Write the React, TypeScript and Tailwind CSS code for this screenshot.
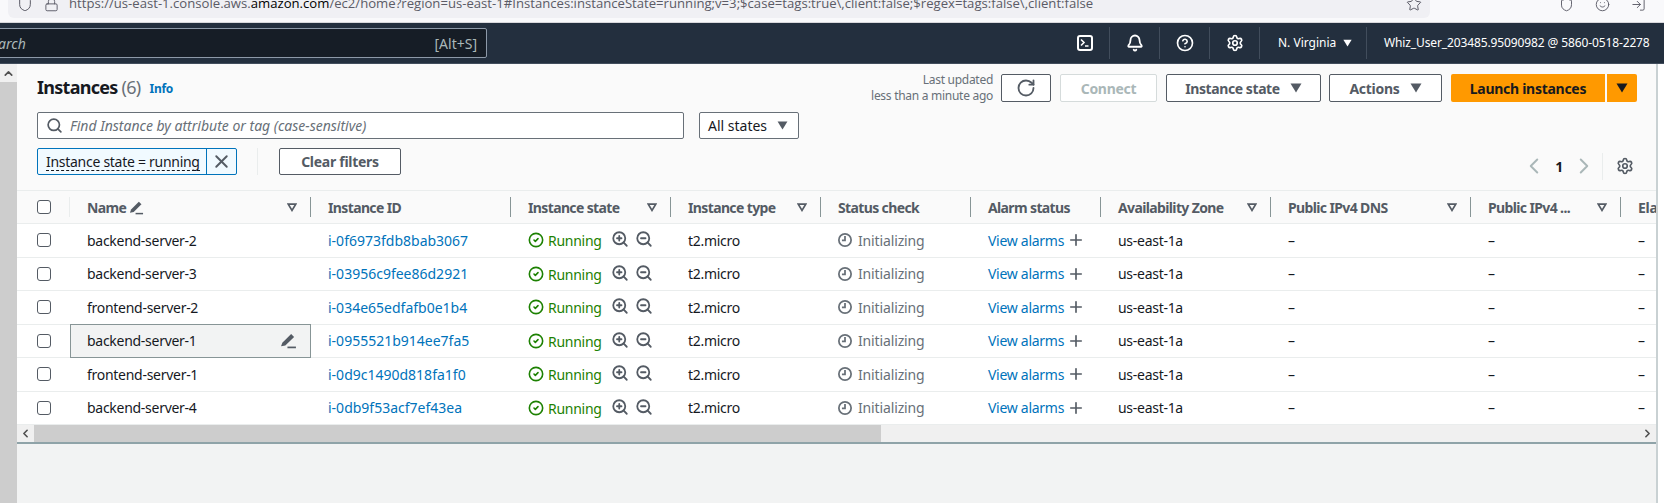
import { ChevronLeft, ChevronRight, ChevronUp, CircleCheck, CircleHelp, Lock, Plus, RotateCw, Search, Settings, Shield, Star, X, ZoomIn, ZoomOut, Bell, Smile, LogIn } from "lucide-react";

const ROWS = [
  { name: "backend-server-2", id: "i-0f6973fdb8bab3067" },
  { name: "backend-server-3", id: "i-03956c9fee86d2921" },
  { name: "frontend-server-2", id: "i-034e65edfafb0e1b4" },
  { name: "backend-server-1", id: "i-0955521b914ee7fa5", active: true },
  { name: "frontend-server-1", id: "i-0d9c1490d818fa1f0" },
  { name: "backend-server-4", id: "i-0db9f53acf7ef43ea" },
];

// fake triangle used by every dropdown
function Caret({ className = "" }: { className?: string }) {
  return (
    <svg viewBox="0 0 12 10" className={className} aria-hidden>
      <path d="M0.5 0.5h11L6 9.5z" fill="currentColor" />
    </svg>
  );
}

function SortCaret() {
  return (
    <svg viewBox="0 0 12 10" className="w-[10px] h-[9px] text-[#545b64]" aria-hidden>
      <path d="M1.5 1h9L6 8.5z" fill="none" stroke="currentColor" strokeWidth="2" />
    </svg>
  );
}

function Pencil({ className = "" }: { className?: string }) {
  return (
    <svg viewBox="0 0 16 16" className={className} aria-hidden>
      <path d="M1 13.5L2.2 10 10.5 1.8 13.3 4.6 5 12.8z" fill="currentColor" />
      <path d="M7 14.5h8" stroke="currentColor" strokeWidth="1.6" />
    </svg>
  );
}

function ClockIcon() {
  return (
    <svg viewBox="0 0 16 16" className="w-[14px] h-[14px] text-[#687078]" aria-hidden>
      <circle cx="8" cy="8" r="7" fill="none" stroke="currentColor" strokeWidth="2" />
      <path d="M8 3.5V8.5H4.5" fill="none" stroke="currentColor" strokeWidth="2" />
    </svg>
  );
}

function Terminal() {
  return (
    <svg viewBox="0 0 16 16" className="w-4 h-4 text-white" aria-hidden>
      <rect x="1" y="1" width="14" height="14" rx="2" fill="none" stroke="currentColor" strokeWidth="2" />
      <path d="M4 4.5L7 7.5 4 10.5M8 11h3.5" fill="none" stroke="currentColor" strokeWidth="1.6" />
    </svg>
  );
}

function Checkbox() {
  return <span className="block w-[14px] h-[14px] rounded-[3px] border border-[#545b64] bg-white" />;
}

function HeaderCell({ label, width, sort }: { label: React.ReactNode; width: string; sort?: boolean }) {
  return (
    <div className={`${width} shrink-0 h-full flex items-center pl-[17px] font-bold text-[#545b64] whitespace-nowrap tracking-[-0.045em]`}>
      <span className="flex-1 flex items-center gap-[3px] min-w-0">{label}</span>
      {sort && (
        <span className="mr-[13px]">
          <SortCaret />
        </span>
      )}
      <span className="w-px h-[20px] bg-[#879596]" />
    </div>
  );
}

function NavIcon({ children }: { children: React.ReactNode }) {
  return (
    <div className="w-[50px] h-[32px] flex items-center justify-center border-r border-[#414d5c]">
      {children}
    </div>
  );
}

export default function App() {
  return (
    <div className="w-[1664px] h-[503px] overflow-hidden flex flex-col bg-white text-[14px] text-[#16191f] [font-family:'Noto_Sans',sans-serif] tracking-[-0.02em]">
      {/* browser chrome, cut by the top of the screenshot */}
      <div className="h-[23px] shrink-0 overflow-hidden bg-[#f9f9fb] border-b border-[#d8d8dc]">
        <div className="-mt-[10px] h-[28px] flex items-center">
          <div className="ml-[8px] w-[1422px] h-[28px] rounded-[6px] bg-[#f0f0f4] flex items-center text-[#5b5b66]">
            <Shield className="ml-[9px] w-[16px] h-[16px]" strokeWidth={1.5} />
            <Lock className="ml-[11px] w-[15px] h-[15px]" strokeWidth={1.5} />
            <span className="ml-[10px] text-[13.13px] tracking-normal [font-family:'Open_Sans',sans-serif] whitespace-nowrap">
              https://us-east-1.console.aws.<span className="text-black">amazon.com</span>
              /ec2/home?region=us-east-1#Instances:instanceState=running;v=3;$case=tags:true\,client:false;$regex=tags:false\,client:false
            </span>
            <Star className="ml-auto mr-[8px] w-[16px] h-[16px]" strokeWidth={1.5} />
          </div>
          <div className="ml-auto mr-[18px] flex items-center gap-[21px] text-[#5b5b66]">
            <Shield className="w-[15px] h-[15px]" strokeWidth={1.5} />
            <Smile className="w-[15px] h-[15px]" strokeWidth={1.5} />
            <LogIn className="w-[15px] h-[15px]" strokeWidth={1.5} />
          </div>
        </div>
      </div>

      {/* AWS top nav */}
      <div className="h-[41px] shrink-0 bg-[#232f3e] border-b border-[#414d5c] flex items-center text-white text-[12px]">
        <div className="-ml-[37px] w-[524px] h-[30px] rounded-[2px] border border-[#8d99a8] bg-[#161d26] flex items-center justify-between pl-[20px] pr-[9px] text-[#aab7b8] text-[14px] tracking-normal">
          <span className="italic">Search</span>
          <span>[Alt+S]</span>
        </div>
        <div className="flex-1" />
        <NavIcon>
          <Terminal />
        </NavIcon>
        <NavIcon>
          <Bell className="w-[18px] h-[18px]" strokeWidth={2.4} />
        </NavIcon>
        <NavIcon>
          <CircleHelp className="w-[18px] h-[18px]" strokeWidth={2.2} />
        </NavIcon>
        <NavIcon>
          <Settings className="w-[18px] h-[18px]" strokeWidth={2.2} />
        </NavIcon>
        <div className="w-[107px] h-[32px] pl-[18px] flex items-center gap-[7px] border-r border-[#414d5c] whitespace-nowrap tracking-normal">
          N. Virginia
          <Caret className="w-[9px] h-[8px]" />
        </div>
        <div className="w-[297px] pl-[17px] overflow-hidden whitespace-nowrap tracking-[-0.01em]">Whiz_User_203485.95090982 @ 5860-0518-2278</div>
      </div>

      <div className="flex-1 min-h-0 flex">
        {/* page scrollbar */}
        <div className="w-[17px] shrink-0 bg-[#cdcdcd] flex flex-col">
          <div className="h-[18px] bg-[#f0f0f0] flex items-center justify-center">
            <ChevronUp className="w-[13px] h-[13px] text-[#505050]" strokeWidth={3} />
          </div>
        </div>

        <div className="w-[1639px] shrink-0 flex flex-col bg-[#f2f3f3] overflow-hidden">
          <div className="h-[127px] shrink-0 bg-[#fafafa] border-b border-[#eaeded] pl-[20px] pr-[19px] pt-[10px] flex flex-col">
            <div className="h-[28px] flex items-center">
              <h1 className="-mt-[1px] text-[18px] font-bold tracking-[-0.04em]">
                Instances <span className="font-normal text-[#687078]">(6)</span>
              </h1>
              <a className="ml-[9px] mt-[2px] text-[12px] font-bold text-[#0073bb]">Info</a>
              <div className="ml-auto text-right text-[12px] leading-[16px] text-[#687078]">
                Last updated
                <br />
                less than a minute ago
              </div>
              <button className="ml-[8px] w-[50px] h-[28px] flex items-center justify-center bg-white border border-[#545b64] rounded-[2px] text-[#545b64]">
                <RotateCw className="w-[20px] h-[20px]" strokeWidth={2.2} />
              </button>
              <button className="ml-[9px] w-[97px] h-[28px] bg-white border border-[#d5dbdb] rounded-[2px] font-bold text-[#aab7b8]">Connect</button>
              <button className="ml-[9px] w-[155px] h-[28px] flex items-center justify-center gap-[10px] bg-white border border-[#545b64] rounded-[2px] font-bold text-[#545b64] tracking-[-0.03em]">
                Instance state
                <Caret className="w-[12px] h-[10px]" />
              </button>
              <button className="ml-[8px] w-[113px] h-[28px] flex items-center justify-center gap-[10px] bg-white border border-[#545b64] rounded-[2px] font-bold text-[#545b64]">
                Actions
                <Caret className="w-[12px] h-[10px]" />
              </button>
              <button className="ml-[9px] w-[154px] h-[28px] bg-[#ff9900] rounded-l-[2px] font-bold text-[#16191f]">Launch instances</button>
              <button className="ml-[2px] w-[30px] h-[28px] flex items-center justify-center bg-[#ff9900] rounded-r-[2px] text-[#16191f]">
                <Caret className="w-[12px] h-[10px]" />
              </button>
            </div>

            <div className="mt-[10px] flex items-center">
              <div className="w-[647px] h-[27px] flex items-center bg-white border border-[#687078] rounded-[2px] pl-[8px] text-[#687078] tracking-normal">
                <Search className="w-[17px] h-[17px] text-[#545b64]" strokeWidth={2.4} />
                <span className="ml-[7px] italic">Find Instance by attribute or tag (case-sensitive)</span>
              </div>
              <div className="ml-[15px] w-[100px] h-[27px] flex items-center justify-between bg-white border border-[#687078] rounded-[2px] pl-[8px] pr-[10px] tracking-normal">
                All states
                <Caret className="w-[11px] h-[9px] text-[#545b64]" />
              </div>
            </div>

            <div className="mt-[9px] h-[27px] flex items-center">
              <div className="w-[200px] h-[27px] flex bg-[#f1faff] border border-[#0073bb] rounded-[2px]">
                <span className="flex-1 pl-[8px] flex items-center whitespace-nowrap overflow-hidden">
                  <span className="border-b border-dashed border-[#16191f] leading-[17px]">Instance state = running</span>
                </span>
                <span className="w-[30px] border-l border-[#0073bb] flex items-center justify-center text-[#545b64]">
                  <X className="w-[21px] h-[21px]" strokeWidth={2.2} />
                </span>
              </div>
              <span className="ml-[20px] w-px h-[27px] bg-[#eaeded]" />
              <button className="ml-[21px] w-[122px] h-[27px] bg-white border border-[#545b64] rounded-[2px] font-bold text-[#545b64]">Clear filters</button>
              <div className="ml-auto mt-[9px] flex items-center">
                <ChevronLeft className="w-[26px] h-[26px] text-[#aab7b8]" strokeWidth={1.8} />
                <span className="ml-[5px] w-[14px] text-center font-bold">1</span>
                <ChevronRight className="ml-[5px] w-[26px] h-[26px] text-[#aab7b8]" strokeWidth={1.8} />
                <span className="ml-[5px] w-px h-[27px] bg-[#eaeded]" />
                <Settings className="ml-[13px] mr-[3px] w-[18px] h-[18px] text-[#545b64]" strokeWidth={2.2} />
              </div>
            </div>
          </div>

          {/* instances table */}
          <div className="h-[33px] shrink-0 flex items-center bg-[#fafafa] border-b border-[#eaeded]">
            <div className="w-[53px] shrink-0 h-full flex items-center justify-between pl-[20px]">
              <Checkbox />
              <span className="w-px h-[20px] bg-[#eaeded]" />
            </div>
            <HeaderCell
              width="w-[241px]"
              sort
              label={
                <>
                  Name <Pencil className="w-[15px] h-[15px]" />
                </>
              }
            />
            <HeaderCell width="w-[200px]" label="Instance ID" />
            <HeaderCell width="w-[160px]" sort label="Instance state" />
            <HeaderCell width="w-[150px]" sort label="Instance type" />
            <HeaderCell width="w-[150px]" label="Status check" />
            <HeaderCell width="w-[130px]" label="Alarm status" />
            <HeaderCell width="w-[170px]" sort label="Availability Zone" />
            <HeaderCell width="w-[200px]" sort label="Public IPv4 DNS" />
            <HeaderCell width="w-[150px]" sort label="Public IPv4 ..." />
            <div className="shrink-0 pl-[17px] font-bold text-[#545b64]">Elastic</div>
          </div>

          {ROWS.map((row) => (
            <div key={row.id} className="h-[33.5px] shrink-0 flex items-center bg-white border-b border-[#eaeded] whitespace-nowrap">
              <div className="w-[53px] shrink-0 pl-[20px]">
                <Checkbox />
              </div>
              {row.active ? (
                <div className="w-[241px] shrink-0 h-[34px] flex items-center justify-between pl-[16px] pr-[13px] bg-[#f2f3f3] border border-[#879596]">
                  {row.name}
                  <Pencil className="w-[17px] h-[17px] text-[#545b64]" />
                </div>
              ) : (
                <div className="w-[241px] shrink-0 pl-[17px]">{row.name}</div>
              )}
              <a className="w-[200px] shrink-0 pl-[17px] text-[#0073bb] tracking-normal">{row.id}</a>
              <div className="w-[160px] shrink-0 pl-[17px] flex items-center">
                <CircleCheck className="w-[16px] h-[16px] text-[#1d8102]" strokeWidth={2.4} />
                <span className="ml-[4px] mt-[1px] text-[#1d8102]">Running</span>
                <ZoomIn className="ml-[9px] -mt-[2px] w-[18px] h-[18px] text-[#545b64]" strokeWidth={2.4} />
                <ZoomOut className="ml-[6px] -mt-[2px] w-[18px] h-[18px] text-[#545b64]" strokeWidth={2.4} />
              </div>
              <div className="w-[150px] shrink-0 pl-[17px]">t2.micro</div>
              <div className="w-[150px] shrink-0 pl-[17px] flex items-center text-[#687078]">
                <ClockIcon />
                <span className="ml-[6px] tracking-[-0.01em]">Initializing</span>
              </div>
              <div className="w-[130px] shrink-0 pl-[17px] flex items-center">
                <a className="text-[#0073bb]">View alarms</a>
                <Plus className="ml-[3px] w-[18px] h-[18px] text-[#545b64]" strokeWidth={2.2} />
              </div>
              <div className="w-[170px] shrink-0 pl-[17px]">us-east-1a</div>
              <div className="w-[200px] shrink-0 pl-[17px]">–</div>
              <div className="w-[150px] shrink-0 pl-[17px]">–</div>
              <div className="shrink-0 pl-[17px]">–</div>
            </div>
          ))}

          {/* table's horizontal scrollbar */}
          <div className="h-[17px] shrink-0 flex bg-[#f0f0f0]">
            <div className="w-[17px] flex items-center justify-center">
              <ChevronLeft className="w-[13px] h-[13px] text-[#505050]" strokeWidth={3} />
            </div>
            <div className="w-[847px] bg-[#cdcdcd]" />
            <div className="flex-1" />
            <div className="w-[17px] flex items-center justify-center">
              <ChevronRight className="w-[13px] h-[13px] text-[#505050]" strokeWidth={3} />
            </div>
          </div>
          <div className="h-[2px] shrink-0 bg-[#8fa3a8]" />
        </div>
        <div className="w-[2px] shrink-0 bg-[#c9d1d3]" />
        <div className="flex-1 bg-white" />
      </div>
    </div>
  );
}
